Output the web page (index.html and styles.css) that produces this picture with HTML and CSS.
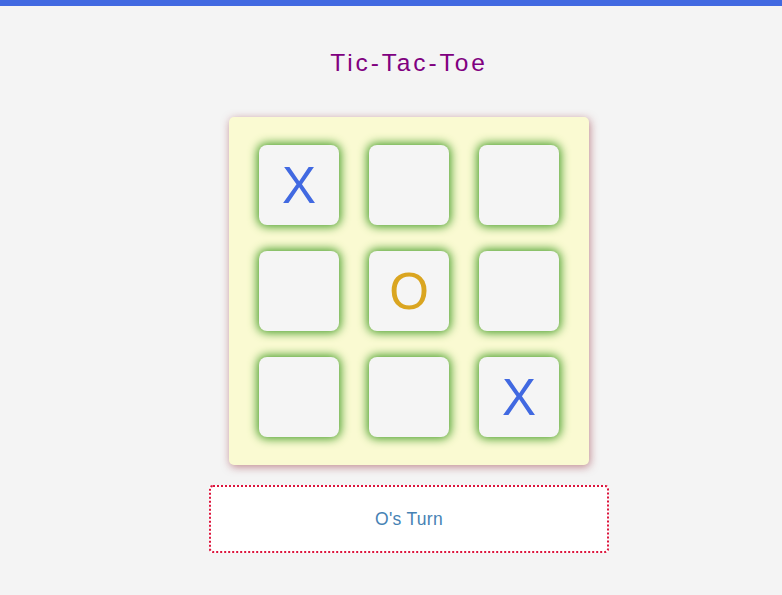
FILE: index.html
```html
<!DOCTYPE html>
<html>
<head>
<meta charset="utf-8">
<link rel="stylesheet" href="styles.css">
</head>
<body>
<div class="topbar"></div>
<main class="page">
  <h1 class="title">Tic-Tac-Toe</h1>
  <div class="board">
    <div class="cell x">X</div>
    <div class="cell"></div>
    <div class="cell"></div>
    <div class="cell"></div>
    <div class="cell o">O</div>
    <div class="cell"></div>
    <div class="cell"></div>
    <div class="cell"></div>
    <div class="cell x">X</div>
  </div>
  <div class="status">O's Turn</div>
</main>
</body>
</html>
```
FILE: styles.css
```css
html, body {
  margin: 0;
  padding: 0;
  background: #f4f4f4;
  font-family: "Liberation Sans", Arial, sans-serif;
}
.topbar {
  height: 6px;
  background: #4169e1;
}
.page {
  display: flex;
  flex-direction: column;
  align-items: center;
  padding-left: 36px;
}
.title {
  margin: 43px 0 0 0;
  font-size: 24.5px;
  font-weight: normal;
  line-height: 28px;
  letter-spacing: 2.9px;
  color: #800080;
}
.board {
  margin-top: 40px;
  width: 360px;
  box-sizing: border-box;
  padding: 28px 30px;
  display: grid;
  grid-template-columns: repeat(3, 80px);
  column-gap: 30px;
  row-gap: 26px;
  background: #fafad2;
  border-radius: 5px;
  box-shadow: 1px 2px 9px rgba(150, 50, 60, 0.55);
}
.cell {
  width: 80px;
  height: 80px;
  background: #f5f5f5;
  border-radius: 8px;
  box-shadow: 0 0 10px 2px rgba(75, 160, 45, 1);
  display: flex;
  align-items: center;
  justify-content: center;
  font-size: 51px;
  line-height: 1;
}
.x { color: #4169e1; }
.o { color: #daa520; }
.status {
  margin-top: 20px;
  width: 400px;
  height: 68px;
  box-sizing: border-box;
  background: #fff;
  border: 2px dotted #dc143c;
  border-radius: 4px;
  display: flex;
  align-items: center;
  justify-content: center;
  font-size: 17.5px;
  letter-spacing: 0.3px;
  color: #4682b4;
}
```
